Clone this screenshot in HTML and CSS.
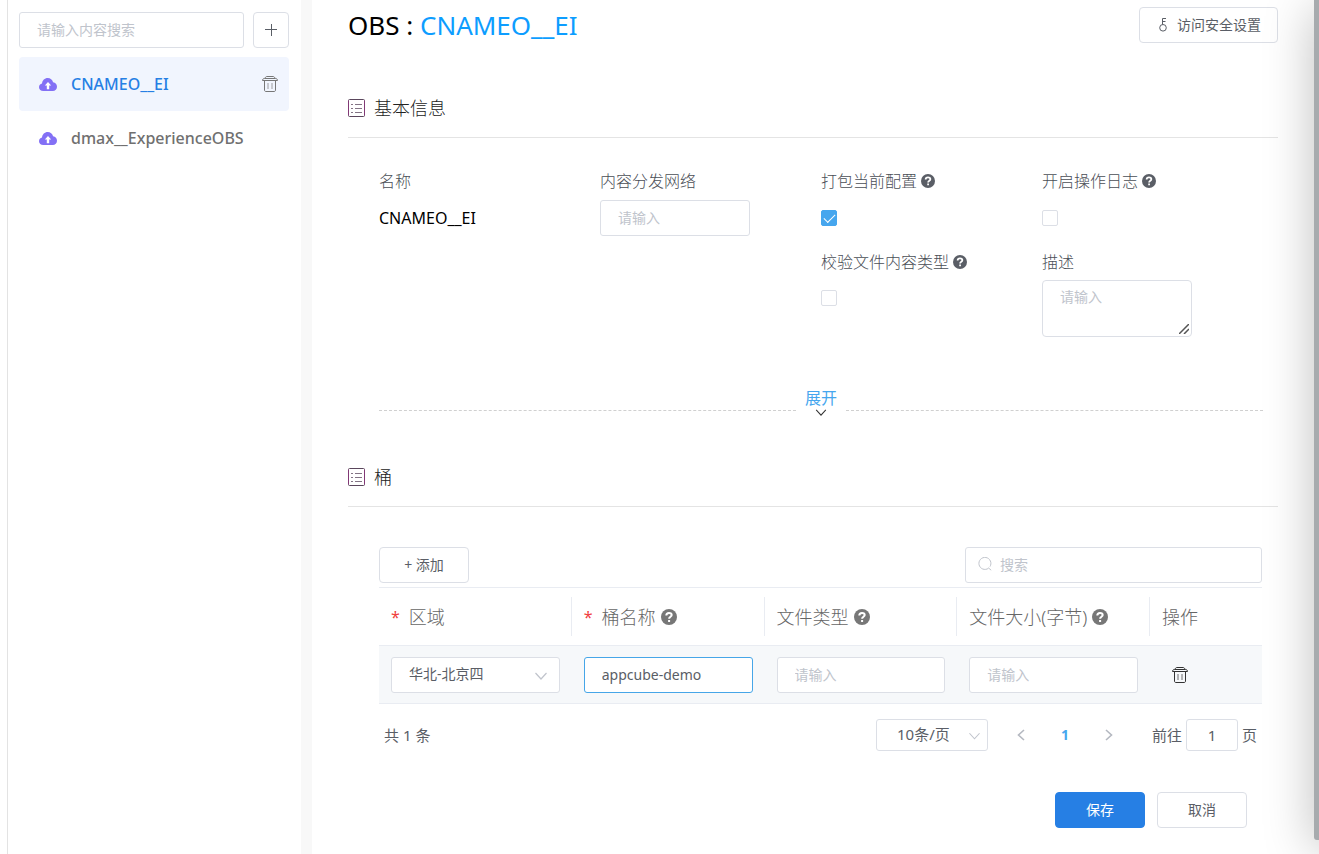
FILE: index.html
```
<!DOCTYPE html>
<html lang="zh-CN">
<head>
<meta charset="utf-8">
<title>OBS : CNAMEO__EI</title>
<link rel="stylesheet" href="styles.css">
</head>
<body>
<svg class="sprite" aria-hidden="true">
  <symbol id="cloud" viewBox="0 0 18 13">
    <path fill="currentColor" d="M4.2 13C1.8 13 0 11.500 0 9.300 0 7.300 1.300 6 3 5.600 3.300 2.300 5.700 0 8.700 0c2.700 0 4.700 1.600 5.400 4.300C16.500 4.700 18 6.400 18 8.700 18 11.200 16.200 13 13.800 13z"/>
    <path fill="#fff" d="M9 4l3.200 3.600h-2v3.600H7.800V7.600h-2z"/>
  </symbol>
  <symbol id="trash" viewBox="0 0 16 16">
    <g fill="none" stroke="currentColor" stroke-width="1">
      <path d="M3 2.500C3.200 1.200 4 .5 5 .5h6c1 0 1.800.7 2 2M.5 4.500c0-1.300.7-2 2-2h11c1.300 0 2 .7 2 2zM2.500 5v9c0 1 .5 1.500 1.500 1.500h8c1 0 1.500-.5 1.500-1.500V5"/>
      <path d="M6 7v6M10 7v6" opacity=".7"/>
    </g>
  </symbol>
  <symbol id="list" viewBox="0 0 17 18">
    <g fill="none" stroke="currentColor">
      <rect x=".5" y=".5" width="16" height="17" rx="1"/>
      <path d="M3 5.500h2M7 5.500h7M3 9.500h2M7 9.500h7M3 13.500h2M7 13.500h7" opacity=".75"/>
    </g>
    <path fill="none" stroke="#9b2f86" d="M.5 1.500v15M16.500 1.500v15" opacity=".6"/>
  </symbol>
  <symbol id="help" viewBox="0 0 16 16">
    <circle cx="8" cy="8" r="8" fill="currentColor"/>
    <path fill="none" stroke="#fff" stroke-width="2" d="M5.300 6.400C5.300 4.700 6.400 3.900 8 3.900s2.700.8 2.700 2.200c0 1.700-2.600 1.700-2.600 3.700M8.100 10.900v2"/>
  </symbol>
  <symbol id="chevron" viewBox="0 0 12 8">
    <path fill="none" stroke="currentColor" stroke-width="1.200" d="M.5 1l5.500 6 5.500-6"/>
  </symbol>
  <symbol id="arrow" viewBox="0 0 8 12">
    <path fill="none" stroke="currentColor" stroke-width="1.600" d="M7 1L1.500 6 7 11"/>
  </symbol>
  <symbol id="search" viewBox="0 0 14 14">
    <path fill="none" stroke="currentColor" d="M10.400 11.300A6 6 0 1 1 12 9.600M10.300 10.800l2.900 2.400"/>
  </symbol>
  <symbol id="key" viewBox="0 0 8 14">
    <path fill="none" stroke="currentColor" d="M3.500 6.500v-6H7M3.500 3.500h3"/>
    <circle cx="4" cy="9.800" r="3.300" fill="none" stroke="currentColor"/>
  </symbol>
  <symbol id="plus" viewBox="0 0 12 12">
    <path fill="none" stroke="currentColor" d="M6.500 0v12M0 5.500h12"/>
  </symbol>
</svg>

<div class="layout">
  <aside class="sidebar">
    <div class="sidebar-tools">
      <input class="field" type="text" placeholder="请输入内容搜索" aria-label="请输入内容搜索">
      <button class="btn btn-icon" type="button" aria-label="新增"><svg class="icon-plus"><use href="#plus"/></svg></button>
    </div>
    <ul class="nav">
      <li class="nav-item active">
        <svg class="icon-cloud"><use href="#cloud"/></svg>
        <a class="nav-link" href="#">CNAMEO__EI</a>
        <button class="ghost" type="button" aria-label="删除"><svg class="icon-trash"><use href="#trash"/></svg></button>
      </li>
      <li class="nav-item">
        <svg class="icon-cloud"><use href="#cloud"/></svg>
        <a class="nav-link" href="#">dmax__ExperienceOBS</a>
      </li>
    </ul>
  </aside>

  <main class="main">
    <header class="page-head">
      <h1 class="title">OBS : <span class="title-name">CNAMEO__EI</span></h1>
      <button class="btn btn-security" type="button"><svg class="icon-key"><use href="#key"/></svg>访问安全设置</button>
    </header>

    <section class="section">
      <h2 class="section-title"><svg class="icon-list"><use href="#list"/></svg>基本信息</h2>
      <div class="panel">
        <div class="form-grid">
          <div class="form-item">
            <span class="label">名称</span>
            <span class="value">CNAMEO__EI</span>
          </div>
          <div class="form-item">
            <label class="label" for="cdn">内容分发网络</label>
            <input class="field" id="cdn" type="text" placeholder="请输入">
          </div>
          <div class="form-item">
            <label class="label" for="pack">打包当前配置<svg class="icon-help"><use href="#help"/></svg></label>
            <span class="value"><input class="check" id="pack" type="checkbox" checked></span>
          </div>
          <div class="form-item">
            <label class="label" for="log">开启操作日志<svg class="icon-help"><use href="#help"/></svg></label>
            <span class="value"><input class="check" id="log" type="checkbox"></span>
          </div>
          <div class="form-item third">
            <label class="label" for="verify">校验文件内容类型<svg class="icon-help"><use href="#help"/></svg></label>
            <span class="value"><input class="check" id="verify" type="checkbox"></span>
          </div>
          <div class="form-item">
            <label class="label" for="desc">描述</label>
            <div class="area-wrap">
              <textarea class="field area" id="desc" placeholder="请输入"></textarea>
              <svg class="grip" viewBox="0 0 10 10"><path fill="none" stroke="#555" stroke-width="1.500" d="M0 10L10 0M5 10l5-5"/></svg>
            </div>
          </div>
        </div>
        <div class="expand">
          <button class="expand-btn" type="button">展开<svg class="icon-chevron"><use href="#chevron"/></svg></button>
        </div>
      </div>
    </section>

    <section class="section">
      <h2 class="section-title"><svg class="icon-list"><use href="#list"/></svg>桶</h2>
      <div class="panel bucket">
        <div class="toolbar">
          <button class="btn btn-text" type="button">+ 添加</button>
          <div class="search">
            <svg class="icon-search"><use href="#search"/></svg>
            <input class="field search-field" type="text" placeholder="搜索" aria-label="搜索">
          </div>
        </div>
        <table class="table">
          <colgroup><col><col><col><col><col class="col-action"></colgroup>
          <thead>
            <tr>
              <th><div class="th"><span class="req">*</span>区域</div></th>
              <th><div class="th"><span class="req">*</span>桶名称<svg class="icon-help"><use href="#help"/></svg></div></th>
              <th><div class="th">文件类型<svg class="icon-help"><use href="#help"/></svg></div></th>
              <th><div class="th">文件大小(字节)<svg class="icon-help"><use href="#help"/></svg></div></th>
              <th><div class="th">操作</div></th>
            </tr>
          </thead>
          <tbody>
            <tr>
              <td><div class="select-wrap"><select class="field" aria-label="区域"><option>华北-北京四</option></select><svg class="icon-chevron"><use href="#chevron"/></svg></div></td>
              <td><input class="field focused" type="text" value="appcube-demo" aria-label="桶名称"></td>
              <td><input class="field" type="text" placeholder="请输入" aria-label="文件类型"></td>
              <td><input class="field" type="text" placeholder="请输入" aria-label="文件大小(字节)"></td>
              <td><button class="ghost row-delete" type="button" aria-label="删除"><svg class="icon-trash"><use href="#trash"/></svg></button></td>
            </tr>
          </tbody>
        </table>
        <div class="pager">
          <span class="total">共 1 条</span>
          <div class="select-wrap size"><select class="field" aria-label="每页条数"><option>10条/页</option></select><svg class="icon-chevron"><use href="#chevron"/></svg></div>
          <button class="ghost page" type="button" aria-label="上一页"><svg class="icon-arrow"><use href="#arrow"/></svg></button>
          <button class="ghost page current" type="button">1</button>
          <button class="ghost page next" type="button" aria-label="下一页"><svg class="icon-arrow"><use href="#arrow"/></svg></button>
          <label class="jump">前往<input class="field" type="text" value="1">页</label>
        </div>
        <div class="actions">
          <button class="btn btn-text primary" type="button">保存</button>
          <button class="btn btn-text" type="button">取消</button>
        </div>
      </div>
    </section>
  </main>
</div>
<div class="edge"></div>
</body>
</html>
```
FILE: styles.css
```
* { box-sizing: border-box; }

body {
  margin: 0;
  background: #fff;
  color: #5a5e66;
  font-family: "Noto Sans", "Noto Sans CJK SC", sans-serif;
  font-size: 14px;
  font-weight: 400;
  line-height: 20px;
}

button, input, select, textarea { font: inherit; color: inherit; }
svg { display: block; flex: none; }
.sprite { position: absolute; width: 0; height: 0; }

.layout {
  display: flex;
  min-height: 100vh;
  margin-left: 7px;
  border-left: 1px solid #e3e3e3;
}

.sidebar {
  flex: none;
  width: 304px;
  padding: 12px 12px 0 11px;
  border-right: 11px solid #f8f8f8;
}
.sidebar-tools { display: flex; gap: 9px; }

.field {
  display: block;
  width: 100%;
  min-width: 0;
  height: 36px;
  padding: 0 17px 2px;
  border: 1px solid #dcdfe6;
  border-radius: 3px;
  background: #fff;
  outline: none;
}
.field::placeholder { color: #c0c4cc; opacity: 1; }
.focused { border-color: #46a6e8; }

.btn {
  display: flex;
  flex: none;
  align-items: center;
  justify-content: center;
  height: 36px;
  padding: 0;
  border: 1px solid #dcdfe6;
  border-radius: 4px;
  background: #fff;
  cursor: pointer;
}
.btn-icon { width: 36px; }
.btn-text { width: 90px; }
.primary { border-color: #267fe4; background: #267fe4; color: #fff; }
.ghost { padding: 0; border: 0; background: none; cursor: pointer; }

.nav { margin: 9px 0 0; padding: 0; list-style: none; }
.nav-item {
  display: flex;
  align-items: center;
  height: 54px;
  padding: 0 11px 0 20px;
  border-radius: 4px;
  color: #777;
}
.active { background: #f1f5fe; }
.nav-link {
  flex: 1;
  margin-left: 14px;
  color: #707070;
  font-size: 16px;
  font-weight: 500;
  text-decoration: none;
}
.active .nav-link { color: #267fe4; }

.icon-plus { width: 12px; height: 12px; }
.icon-cloud { width: 18px; height: 13px; color: #8370f5; }
.icon-trash { width: 16px; height: 16px; }
.icon-list { width: 17px; height: 18px; color: #5a465c; }
.icon-help { width: 14px; height: 14px; color: #5a5e66; }
.icon-chevron { width: 12px; height: 8px; }
.icon-arrow { width: 8px; height: 12px; }
.icon-search { width: 14px; height: 14px; }
.icon-key { width: 8px; height: 14px; }

.main {
  flex: 1;
  min-width: 0;
  padding: 7px 41px 26px 36px;
}
.page-head { display: flex; align-items: center; justify-content: space-between; height: 36px; }
.title { margin: 0; color: #000; font-size: 26px; font-weight: 400; line-height: 36px; }
.title-name { color: #0d9dff; }
.btn-security { gap: 10px; padding: 0 16px 0 19px; }

.section-title {
  display: flex;
  align-items: center;
  gap: 9px;
  height: 60px;
  margin: 0;
  border-bottom: 1px solid #e4e4e4;
  color: #222;
  font-size: 18px;
  font-weight: 300;
}
.page-head + .section { margin-top: 35px; }
.section + .section { margin-top: 30px; }
.panel { padding: 0 15px 0 31px; }

.form-grid {
  display: grid;
  grid-template-columns: repeat(4, 1fr);
  padding-top: 31px;
}
.form-item { padding-right: 71px; margin-bottom: 8px; min-height: 73px; }
.third { grid-column: 3; }
.label {
  display: flex;
  align-items: center;
  gap: 4px;
  height: 24px;
  margin-bottom: 7px;
  color: #4a4e56;
  font-size: 16px;
  font-weight: 300;
  white-space: nowrap;
}
.third .label, .third + .form-item .label { margin-bottom: 6px; }
.value { display: flex; align-items: center; height: 36px; color: #000; font-size: 16px; }

.check {
  appearance: none;
  width: 16px;
  height: 16px;
  margin: 0;
  border: 1px solid #dcdfe6;
  border-radius: 2px;
  background: #fff;
}
.check:checked { display: grid; place-items: center; border-color: #46a6ee; background: #46a6ee; }
.check:checked::after {
  content: "";
  width: 10px;
  height: 5px;
  margin-bottom: 3px;
  border: solid #fff;
  border-width: 0 0 1px 1px;
  rotate: -45deg;
}

.area-wrap { position: relative; }
.area { height: 57px; padding: 6px 17px; border-radius: 4px; resize: none; }
.grip { position: absolute; right: 3px; bottom: 3px; width: 10px; height: 10px; }

.expand {
  display: flex;
  align-items: center;
  margin-top: 42px;
}
.expand::before, .expand::after { content: ""; flex: 1; margin-top: 16px; border-top: 1px dashed #d0d0d0; }
.expand-btn {
  display: flex;
  flex-direction: column;
  align-items: center;
  height: 30px;
  padding: 0 9px;
  border: 0;
  background: none;
  color: #46a6ee;
  font-size: 16px;
  line-height: 22px;
}
.expand-btn .icon-chevron { height: 7px; color: #333; }

.bucket { padding: 40px 16px 0 31px; }
.toolbar { display: flex; justify-content: space-between; }
.search { position: relative; width: 297px; }
.search-field { padding-left: 34px; }
.icon-search { position: absolute; top: 10px; left: 13px; color: #c0c4cc; }

.table {
  width: 100%;
  margin-top: 4px;
  border-collapse: collapse;
  border-top: 1px solid #e9ecf2;
  table-layout: fixed;
}
.col-action { width: 112px; }
.table th { padding: 9px 0; font-weight: 300; text-align: left; }
.th {
  display: flex;
  align-items: center;
  height: 39px;
  padding-left: 12px;
  border-right: 1px solid #e9ecf2;
  color: #666;
  font-size: 18px;
  white-space: nowrap;
}
th:last-child .th { border-right: 0; }
.th .icon-help { width: 16px; height: 16px; margin-left: 5px; color: #777; }
.req { margin-right: 9px; color: #f04040; font-size: 16px; font-weight: 400; }
.table td {
  padding: 11px 12px 10px;
  border-top: 1px solid #e9ecf2;
  border-bottom: 1px solid #e9ecf2;
  background: #f6f8fa;
}
.row-delete { display: block; margin-left: 10px; color: #333; }

.select-wrap { position: relative; }
.select-wrap select { appearance: none; }
.select-wrap .icon-chevron { position: absolute; right: 13px; top: 50%; margin-top: -3px; color: #c0c4cc; pointer-events: none; }

.pager { display: flex; align-items: center; margin-top: 15px; padding: 0 5px; font-size: 15px; }
.total { flex: 1; }
.pager .field { height: 32px; }
.size { width: 112px; margin-right: 11px; }
.size select { padding-left: 20px; }
.size .icon-chevron { right: 8px; width: 11px; }
.page { display: flex; align-items: center; justify-content: center; width: 44px; height: 32px; color: #b4b8c0; }
.current { color: #46a6ee; font-size: 14px; font-weight: 700; }
.next svg { rotate: 180deg; }
.jump { display: flex; align-items: center; gap: 4px; margin-left: 21px; }
.jump .field { width: 52px; padding: 0; text-align: center; }

.actions { display: flex; justify-content: flex-end; gap: 12px; margin-top: 41px; padding-right: 15px; }

.edge {
  position: fixed;
  top: 0;
  right: -75px;
  width: 80px;
  height: 840px;
  border-radius: 0 0 0 3px;
  background: #a7abae;
  box-shadow: 0 8px 50px rgba(0, 0, 0, .26);
  pointer-events: none;
}
```
